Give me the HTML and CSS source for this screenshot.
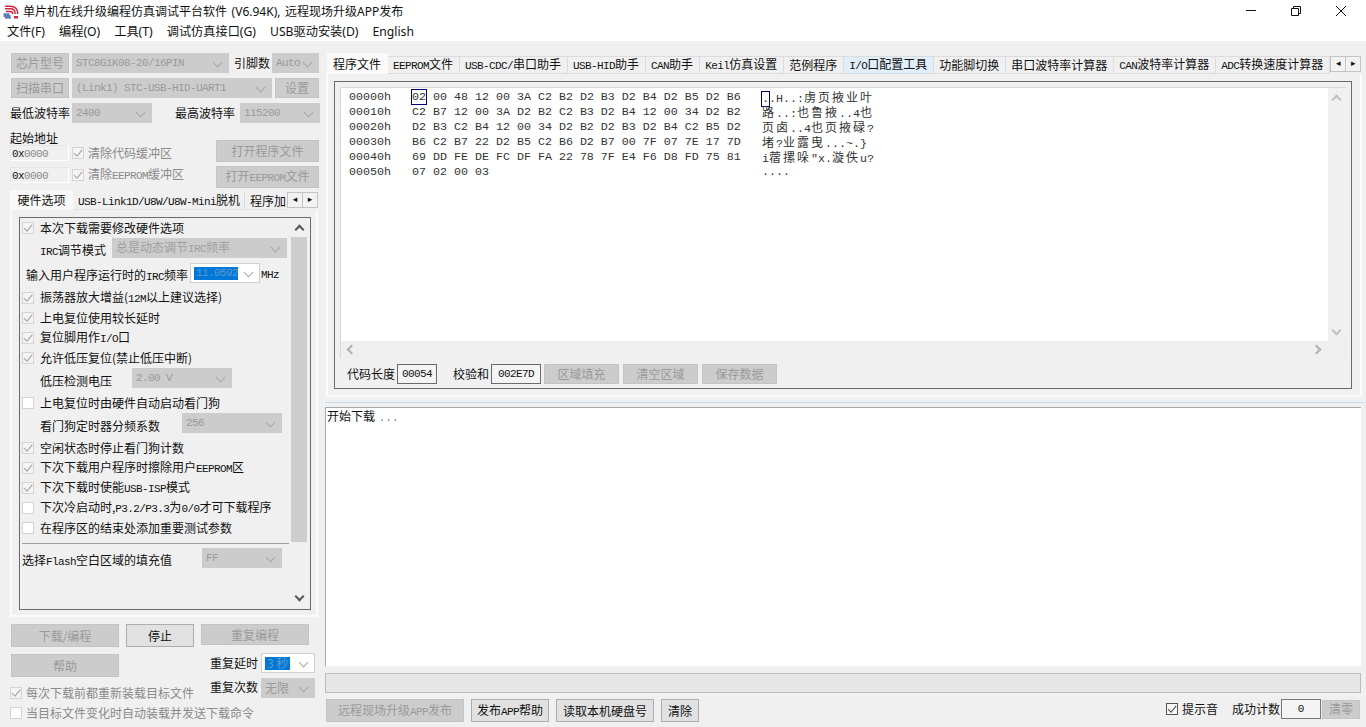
FILE: index.html
```html
<!DOCTYPE html>
<html lang="zh">
<head>
<meta charset="utf-8">
<title>单片机在线升级编程仿真调试平台软件</title>
<link rel="stylesheet" href="styles.css">
</head>
<body>
<svg class="defs" width="0" height="0"><symbol id="ck" viewBox="0 0 12 12"><path d="M2 6.200 5 9.200 10.200 2.800" fill="none" stroke="currentColor" stroke-width="1.100"/></symbol></svg>
<div class="app">
  <header class="title">
    <svg class="logo" viewBox="0 0 16 14" width="16" height="14"><path d="M2 1.200H7Q14.800 1.200 14.800 9M2 3.800H7Q12.200 3.800 12.200 9M3 6.400H7Q9.700 6.400 9.700 9" fill="none" stroke="#d8253a" stroke-width="1.500"/><path d="M0.500 9.200H6.500M0.500 11H7.500M2 12.800H8" stroke="#2a4fa8" stroke-width="1.300"/><path d="M11 11h4v2.500h-4z" fill="#d8253a"/></svg>
    <span class="title-text">单片机在线升级编程仿真调试平台软件 (V6.94K), 远程现场升级APP发布</span>
    <div class="winctl">
      <svg width="12" height="12" viewBox="0 0 12 12"><path d="M1 5.500h10" stroke="#111"/></svg>
      <svg width="12" height="12" viewBox="0 0 12 12"><path d="M1.500 3.500h7v7h-7zM3.500 3.500v-2h7v7h-2" fill="none" stroke="#111"/></svg>
      <svg width="12" height="12" viewBox="0 0 12 12"><path d="M1 1 11 11M11 1 1 11" stroke="#111"/></svg>
    </div>
  </header>
  <nav class="menu">
    <span>文件(F)</span><span>编程(O)</span><span>工具(T)</span><span>调试仿真接口(G)</span><span>USB驱动安装(D)</span><span>English</span>
  </nav>
  <main class="main">
    <section class="left">
      <div class="row">
        <span class="btn off w58">芯片型号</span>
        <span class="sel off w157 ml3"><span class="l">STC8G1K08-20/16PIN</span></span>
        <span class="lab ml5 w35">引脚数</span>
        <span class="sel off w47 ml3"><span class="l">Auto</span></span>
      </div>
      <div class="row">
        <span class="btn off w58">扫描串口</span>
        <span class="sel off w200 ml3"><span class="l">(Link1) STC-USB-HID-UART1</span></span>
        <span class="btn off w44 ml3">设置</span>
      </div>
      <div class="row">
        <span class="lab w62">最低波特率</span>
        <span class="sel off w80"><span class="l">2400</span></span>
        <span class="lab w60 ml23">最高波特率</span>
        <span class="sel off w80 ml5"><span class="l">115200</span></span>
      </div>
      <div class="addr">
        <div class="addr-l">
          <div class="lab addr-title">起始地址</div>
          <div class="addr-row">
            <span class="inp"><span><span class="l">0x</span><span class="l g">0000</span></span></span>
            <i class="cb dis"><svg><use href="#ck"/></svg></i><span class="g">清除代码缓冲区</span>
          </div>
          <div class="addr-row second">
            <span class="inp"><span><span class="l">0x</span><span class="l g">0000</span></span></span>
            <i class="cb dis"><svg><use href="#ck"/></svg></i><span class="g">清除<span class="l">EEPROM</span>缓冲区</span>
          </div>
        </div>
        <div class="addr-r">
          <span class="btn off w103 h22">打开程序文件</span>
          <span class="btn off w103 h22"><span>打开<span class="l">EEPROM</span>文件</span></span>
        </div>
      </div>
      <div class="ltabs">
        <span class="ltab on">硬件选项</span>
        <span class="ltab t2"><span><span class="l">USB-Link1D/U8W/U8W-Mini</span>脱机</span></span>
        <span class="ltab t3">程序加</span>
        <span class="arrows"><i>◂</i><i>▸</i></span>
      </div>
      <div class="lpanel">
        <div class="opts">
          <div class="optlist">
            <div class="opt"><i class="cb dis"><svg><use href="#ck"/></svg></i><span>本次下载需要修改硬件选项</span></div>
            <div class="opt ind"><span class="w72 low"><span class="l">IRC</span>调节模式</span><span class="sel off w175"><span class="g2">总是动态调节<span class="l">IRC</span>频率</span></span></div>
            <div class="opt mt5 freq"><span class="w164 low"><span>输入用户程序运行时的<span class="l">IRC</span>频率</span></span><span class="sel w70"><span class="hl"><span class="l">11.0592</span></span></span><span class="l mhz low">MHz</span></div>
            <div class="opt mt5"><i class="cb dis"><svg><use href="#ck"/></svg></i><span>振荡器放大增益(<span class="l">12M</span>以上建议选择)</span></div>
            <div class="opt"><i class="cb dis"><svg><use href="#ck"/></svg></i><span>上电复位使用较长延时</span></div>
            <div class="opt"><i class="cb dis"><svg><use href="#ck"/></svg></i><span>复位脚用作<span class="l">I/O</span>口</span></div>
            <div class="opt"><i class="cb dis"><svg><use href="#ck"/></svg></i><span>允许低压复位(禁止低压中断)</span></div>
            <div class="opt ind"><span class="w92 low">低压检测电压</span><span class="sel off w100"><span class="l">2.00 V</span></span></div>
            <div class="opt mt5"><i class="cb blank"></i><span>上电复位时由硬件自动启动看门狗</span></div>
            <div class="opt ind"><span class="w142 low">看门狗定时器分频系数</span><span class="sel off w100"><span class="l">256</span></span></div>
            <div class="opt mt5"><i class="cb dis"><svg><use href="#ck"/></svg></i><span>空闲状态时停止看门狗计数</span></div>
            <div class="opt"><i class="cb dis"><svg><use href="#ck"/></svg></i><span>下次下载用户程序时擦除用户<span class="l">EEPROM</span>区</span></div>
            <div class="opt"><i class="cb dis"><svg><use href="#ck"/></svg></i><span>下次下载时使能<span class="l">USB-ISP</span>模式</span></div>
            <div class="opt"><i class="cb blank"></i><span>下次冷启动时,<span class="l">P3.2/P3.3</span>为<span class="l">0/0</span>才可下载程序</span></div>
            <div class="opt"><i class="cb blank"></i><span>在程序区的结束处添加重要测试参数</span></div>
            <hr class="sep">
            <div class="opt flash"><span class="w180 low">选择<span class="l">Flash</span>空白区域的填充值</span><span class="sel off w80"><span class="l">FF</span></span></div>
          </div>
          <div class="vbar">
            <i class="up"></i><b class="thumb"></b><i class="down"></i>
          </div>
        </div>
      </div>
      <div class="actions">
        <span class="btn off w108 h23">下载/编程</span>
        <span class="btn w68 h23">停止</span>
        <span class="btn off w108 h21">重复编程</span>
      </div>
      <div class="repeat">
        <span class="btn off w108 h23">帮助</span>
        <span class="lab rep-lab">重复延时</span>
        <span class="sel w54 rep-sel"><span class="hl"><span>3 秒</span></span></span>
      </div>
      <div class="repeat2">
        <label class="chk"><i class="cb dis"><svg><use href="#ck"/></svg></i><span class="g">每次下载前都重新装载目标文件</span></label>
        <span class="lab rep2-lab">重复次数</span>
        <span class="sel off w54">无限</span>
      </div>
      <label class="chk last"><i class="cb blank"></i><span class="g">当目标文件变化时自动装载并发送下载命令</span></label>
    </section>
    <section class="right">
      <div class="rtabs">
        <span class="rtab on">程序文件</span>
        <span class="rtab"><span><span class="l">EEPROM</span>文件</span></span>
        <span class="rtab"><span><span class="l">USB-CDC/</span>串口助手</span></span>
        <span class="rtab"><span><span class="l">USB-HID</span>助手</span></span>
        <span class="rtab"><span><span class="l">CAN</span>助手</span></span>
        <span class="rtab"><span><span class="l">Keil</span>仿真设置</span></span>
        <span class="rtab">范例程序</span>
        <span class="rtab hov"><span><span class="l">I/O</span>口配置工具</span></span>
        <span class="rtab">功能脚切换</span>
        <span class="rtab">串口波特率计算器</span>
        <span class="rtab"><span><span class="l">CAN</span>波特率计算器</span></span>
        <span class="rtab"><span><span class="l">ADC</span>转换速度计算器</span></span>
        <span class="arrows"><i>◂</i><i>▸</i></span>
      </div>
      <div class="rpanel">
        <div class="group">
          <div class="hexwrap">
            <div class="hexmain">
              <div class="hex">
                <div class="hl-row"><span>00000h</span><span><b class="cur">02</b> 00 48 12 00 3A C2 B2 D2 B3 D2 B4 D2 B5 D2 B6</span><span class="asc"><b class="cur one">.</b>.H..:<em>虏页掖业叶</em></span></div>
                <div class="hl-row"><span>00010h</span><span>C2 B7 12 00 3A D2 B2 C2 B3 D2 B4 12 00 34 D2 B2</span><span class="asc"><em>路</em>..:<em>也鲁掖</em>..4<em>也</em></span></div>
                <div class="hl-row"><span>00020h</span><span>D2 B3 C2 B4 12 00 34 D2 B2 D2 B3 D2 B4 C2 B5 D2</span><span class="asc"><em>页卤</em>..4<em>也页掖碌</em>?</span></div>
                <div class="hl-row"><span>00030h</span><span>B6 C2 B7 22 D2 B5 C2 B6 D2 B7 00 7F 07 7E 17 7D</span><span class="asc"><em>堵</em>?<em>业露曳</em>...~.}</span></div>
                <div class="hl-row"><span>00040h</span><span>69 DD FE DE FC DF FA 22 78 7F E4 F6 D8 FD 75 81</span><span class="asc">i<em>蓿摞哚</em>"x.<em>漩佚</em>u?</span></div>
                <div class="hl-row"><span>00050h</span><span>07 02 00 03</span><span class="asc">....</span></div>
              </div>
              <div class="hexv"><i class="up lite"></i><i class="down lite"></i></div>
            </div>
            <div class="hexh"><i class="lt"></i><i class="rt"></i></div>
          </div>
          <div class="hexfoot">
            <span class="lab">代码长度</span>
            <span class="val w40"><span class="l">00054</span></span>
            <span class="lab ml16">校验和</span>
            <span class="val w50"><span class="l">002E7D</span></span>
            <span class="btn off w75 ml3">区域填充</span>
            <span class="btn off w75 ml4">清空区域</span>
            <span class="btn off w75 ml4">保存数据</span>
          </div>
        </div>
      </div>
      <div class="splitter"></div>
      <div class="log">开始下载 <span class="l g3 dots">...</span></div>
      <div class="progress"></div>
      <div class="foot">
        <span class="btn off w138 h23"><span>远程现场升级<span class="l">APP</span>发布</span></span>
        <span class="btn w78 h23 ml7"><span>发布<span class="l">APP</span>帮助</span></span>
        <span class="btn w98 h23 ml7">读取本机硬盘号</span>
        <span class="btn w38 h23 ml7">清除</span>
        <span class="foot-right">
          <i class="cb live"><svg><use href="#ck"/></svg></i><span>提示音</span>
          <span class="lab count">成功计数</span>
          <span class="val w40 cnt">0</span>
          <span class="btn off w38 h19 ml1">清零</span>
        </span>
      </div>
    </section>
  </main>
</div>
</body>
</html>
```
FILE: styles.css
```css
* { box-sizing: border-box; }
html, body { margin: 0; padding: 0; }
body {
  width: 1366px; height: 727px; overflow: hidden;
  background: #f0f0f0; color: #111;
  font: 12px/1 "Noto Sans CJK SC", "Noto Sans", sans-serif;
}
.defs { display: block; height: 0; }
.app { width: 1366px; height: 727px; display: flex; flex-direction: column; overflow: hidden; }
i, em { font-style: normal; }

/* Latin runs in the fixed face */
.l { font: 11px/1 "Liberation Mono", monospace; letter-spacing: -.6px; }
.g { color: #8a8a8a; }
.g2 { color: #a0a0a0; }
.g3 { color: #777; }

/* title + menu */
.title { height: 22px; background: #fff; display: flex; align-items: center; padding: 1px 0 0 3px; position: relative; }
.logo { flex: none; margin-right: 4px; }
.title-text { font: 12px/1 "Noto Sans", "Noto Sans CJK SC", sans-serif; word-spacing: 1.500px; }
.winctl { margin-left: auto; display: flex; gap: 33px; padding: 0 19px 2px 0; align-items: center; }
.menu { height: 19px; background: #fff; display: flex; align-items: center; padding: 2px 0 0 7px; gap: 14px; font: 12.200px/1 "Noto Sans", "Noto Sans CJK SC", sans-serif; }

.main { flex: 1; display: flex; min-height: 0; }

/* generic controls */
.btn {
  display: inline-flex; align-items: center; justify-content: center; flex: none;
  height: 20px; background: #e1e1e1; border: 1px solid #adadad; white-space: nowrap;
}
.btn.off { background: #ccc; border-color: #c4c4c4; color: #9a9a9a; }
.sel {
  position: relative; display: inline-flex; align-items: center; flex: none;
  height: 20px; padding-left: 3px; background: #fff; border: 1px solid #d0d0d0; white-space: nowrap;
}
.sel.off { background: #ccc; border-color: #ccc; color: #9a9a9a; }
.sel::after {
  content: ""; position: absolute; right: 7px; top: 5px; width: 6px; height: 6px;
  border-right: 1px solid #a8a8a8; border-bottom: 1px solid #a8a8a8; transform: rotate(45deg);
}
.hl { background: #0078d7; color: #5d98cc; display: inline-flex; align-items: center; height: 13px; padding: 0 2px; flex: none; }
.rep-sel .hl { width: 25px; }
.freq .hl { width: 44px; }
.lab { white-space: nowrap; flex: none; }
.cb { display: inline-block; flex: none; width: 12px; height: 12px; border: 1px solid #d4d4d4; background: #f4f4f4; color: #a6a6a6; margin-right: 6px; position: relative; }
.cb svg { display: block; width: 12px; height: 12px; position: absolute; left: -1px; top: -1px; }
.cb.blank { background: #fff; }
.cb.live { background: #f7f7f7; border-color: #555; color: #555; margin-right: 4px; }

.w35 { width: 35px; } .w38 { width: 38px; } .w40 { width: 40px; } .w44 { width: 44px; } .w47 { width: 47px; } .w50 { width: 50px; }
.w54 { width: 54px; } .w58 { width: 58px; } .w60 { width: 60px; } .w62 { width: 62px; } .w68 { width: 68px; } .w70 { width: 70px; }
.w72 { width: 72px; flex: none; } .w75 { width: 75px; } .w78 { width: 78px; } .w80 { width: 80px; } .w92 { width: 92px; flex: none; } .w98 { width: 98px; }
.w100 { width: 100px; } .w103 { width: 103px; } .w108 { width: 108px; } .w138 { width: 138px; } .w142 { width: 142px; flex: none; } .w157 { width: 157px; }
.w164 { width: 164px; flex: none; } .w175 { width: 175px; } .w180 { width: 180px; flex: none; } .w200 { width: 200px; }
.h19 { height: 19px; } .h21 { height: 21px; } .h22 { height: 22px; } .h23 { height: 23px; }
.ml1 { margin-left: 1px; } .ml3 { margin-left: 3px; } .ml4 { margin-left: 4px; } .ml5 { margin-left: 5px; } .ml7 { margin-left: 7px; } .ml16 { margin-left: 16px; } .ml23 { margin-left: 23px; }
.mt5 { margin-top: 5px; }
.low { margin-top: 5px; }

/* left column */
.left { width: 325px; flex: none; padding: 12px 0 0 11px; display: flex; flex-direction: column; }
.row { display: flex; align-items: center; height: 20px; margin-bottom: 5px; flex: none; }
.row .lab:first-child { margin-left: -1px; }
.addr { display: flex; flex: none; height: 60px; margin-top: 2px; margin-left: -1px; }
.addr-l { width: 206px; flex: none; margin-top: 1px; }
.addr-title { height: 13px; line-height: 13px; margin-bottom: 1px; }
.addr-row { display: flex; align-items: center; height: 16px; }
.addr-row.second { margin-top: 6px; }
.addr-row .cb { margin-left: 3px; margin-right: 4px; }
.inp { display: inline-flex; align-items: center; width: 59px; height: 16px; padding-left: 1px; flex: none; border: 1px solid #e6e6e6; border-right-color: #fff; border-bottom-color: #fff; }
.addr-r { display: flex; flex-direction: column; gap: 4px; margin-top: 10px; }

.ltabs { display: flex; flex: none; height: 20px; margin-left: -1px; align-items: flex-end; position: relative; width: 308px; }
.ltab { height: 18px; display: flex; align-items: center; padding: 0 5px; background: #f0f0f0; border-right: 1px solid #dcdcdc; border-bottom: 1px solid #e3e3e3; white-space: nowrap; flex: none; }
.ltab.on { height: 20px; width: 63px; justify-content: center; background: #f9f9f9; border: 0; }
.ltab.t2 { width: 172px; }
.ltab.t3 { width: 42px; overflow: hidden; border: 0; border-bottom: 1px solid #e3e3e3; }
.arrows { display: flex; flex: none; height: 16px; align-self: flex-end; margin-bottom: 2px; }
.arrows i { width: 16px; height: 16px; background: #f2f2f2; border: 1px solid #c4c4c4; margin-left: -1px; font-size: 9px; line-height: 13px; text-align: center; color: #111; font-family: "DejaVu Sans", sans-serif; }
.ltabs .arrows i:first-child { margin-left: 0; }
.lpanel { width: 308px; height: 407px; flex: none; margin-left: -1px; padding: 7px 6px 5px 7px; border: 2px solid #fbfbfb; border-top: 0; }
.opts { height: 393px; width: 292px; border: 1px solid #6a6a6a; display: flex; }
.optlist { flex: 1; min-width: 0; padding-left: 2px; }
.opt { display: flex; align-items: center; height: 20px; white-space: nowrap; }
.opt.ind { padding-left: 18px; }
.opt.freq { padding-left: 4px; }
.mhz { margin-left: 1px; }
.sep { margin: 5px 2px 4px 0; border: 0; border-top: 1px solid #a0a0a0; height: 0; }
.vbar { flex: none; width: 16px; margin-right: 3px; display: flex; flex-direction: column; position: relative; }
.vbar .up, .vbar .down, .hexv i { display: block; height: 18px; position: relative; flex: none; }
.vbar .up { height: 19px; }
.vbar .up::after, .hexv .up::after { content: ""; position: absolute; left: 5px; top: 8px; width: 5px; height: 5px; border-left: 2px solid #555; border-top: 2px solid #555; transform: rotate(45deg); }
.vbar .down::after, .hexv .down::after { content: ""; position: absolute; left: 5px; top: 4px; width: 5px; height: 5px; border-right: 2px solid #555; border-bottom: 2px solid #555; transform: rotate(45deg); }
.hexv .lite::after { border-color: #c0c0c0; }
.vbar .thumb { display: block; height: 305px; background: #cdcdcd; flex: none; }
.vbar .down { margin-top: auto; margin-bottom: 2px; }

.actions { display: flex; flex: none; gap: 7px; margin-top: 7px; height: 30px; align-items: flex-start; }
.repeat { display: flex; flex: none; align-items: center; height: 24px; }
.repeat .btn { align-self: flex-start; }
.rep-lab { margin-left: 91px; align-self: flex-start; margin-top: 3px; }
.rep-sel { margin-left: 3px; height: 20px; align-self: flex-start; margin-top: -1px; }
.repeat2 { display: flex; flex: none; height: 25px; }
.chk { display: flex; flex: none; align-items: center; height: 20px; margin-left: -1px; white-space: nowrap; align-self: flex-end; width: 200px; }
.chk .cb { margin-right: 4px; }
.rep2-lab { margin-top: 3px; }
.repeat2 .sel { margin-left: 3px; }
.chk.last { width: auto; align-self: auto; }

/* right column */
.right { flex: 1; min-width: 0; display: flex; flex-direction: column; padding-top: 12px; }
.rtabs { display: flex; flex: none; height: 21px; padding-left: 2px; align-items: flex-end; }
.rtab { height: 18px; display: flex; align-items: center; padding: 0 6px 0 5px; border-top: 1px solid #dcdcdc; border-right: 1px solid #dcdcdc; border-bottom: 1px solid #dcdcdc; white-space: nowrap; flex: none; }
.rtab.on { height: 21px; width: 61px; justify-content: center; padding: 0 1px 0 0; background: #fafafa; border: 0; }
.rtab.hov { background: #e0eef9; }
.rtabs .arrows { margin-bottom: 2px; }
.rtabs .arrows i:first-child { margin-left: 0; }
.rpanel { flex: none; margin-left: 1px; width: 1036px; height: 323px; padding: 7px 8px 6px 6px; border: 2px solid #fbfbfb; border-top: 0; }
.group { height: 308px; width: 1018px; border: 1px solid #6a6a6a; padding: 5px 5px 0 5px; }
.hexwrap { height: 271px; width: 1006px; border-left: 1px solid #d8d8d8; border-top: 1px solid #d8d8d8; }
.hexmain { display: flex; height: 253px; background: #fff; }
.hex { flex: 1; padding: 2px 0 0 8px; }
.hl-row { display: flex; height: 15px; align-items: center; font: 11.670px/15px "Liberation Mono", "Noto Sans CJK SC", monospace; color: #333; white-space: pre; }
.hl-row > span:nth-child(1) { width: 63px; flex: none; }
.hl-row > span:nth-child(2) { width: 350px; flex: none; }
.asc em { font: 12px/15px "Noto Sans CJK SC", sans-serif; letter-spacing: 2px; }
.cur { font-weight: normal; outline: 1px solid #000080; }
.hexv { width: 18px; flex: none; background: #f0f0f0; display: flex; flex-direction: column; justify-content: space-between; }
.hexh { height: 17px; display: flex; justify-content: space-between; background: #efefef; position: relative; }
.hexh i { width: 18px; height: 16px; position: relative; display: block; }
.hexh .lt::after { content: ""; position: absolute; left: 7px; top: 5px; width: 5px; height: 5px; border-left: 2px solid #b0b0b0; border-bottom: 2px solid #b0b0b0; transform: rotate(45deg); }
.hexh .rt::after { content: ""; position: absolute; right: 26px; top: 5px; width: 5px; height: 5px; border-right: 2px solid #b0b0b0; border-top: 2px solid #b0b0b0; transform: rotate(45deg); }
.hexfoot { display: flex; align-items: center; height: 20px; margin-top: 6px; padding-left: 7px; }
.hexfoot .lab { margin-right: 2px; }
.val { display: inline-flex; align-items: center; justify-content: center; height: 20px; flex: none; background: #f4f4f4; border: 1px solid #6a6a6a; }
.splitter { flex: none; height: 11px; margin-top: -1px; padding-top: 6px; }
.splitter::after { content: ""; display: block; height: 1px; background: #c4e0ee; }
.log { flex: none; height: 259px; width: 1036px; background: #fff; border-top: 1px solid #a8a8a8; border-left: 1px solid #a8a8a8; padding: 1px 0 0 1px; line-height: 14px; }
.dots { letter-spacing: 0; margin-left: 1px; }
.progress { flex: none; height: 20px; width: 1036px; margin-top: 7px; background: #e6e6e6; border: 1px solid #bcbcbc; }
.foot { display: flex; flex: none; margin-top: 6px; margin-left: 1px; align-items: flex-start; }
.foot-right { margin-left: auto; margin-right: 6px; display: flex; align-items: center; height: 20px; }
.count { margin: 0 1px 0 14px; }
.cnt { border-color: #777; background: #f4f4f4; font: 11px/1 "Liberation Mono", monospace; }
```
